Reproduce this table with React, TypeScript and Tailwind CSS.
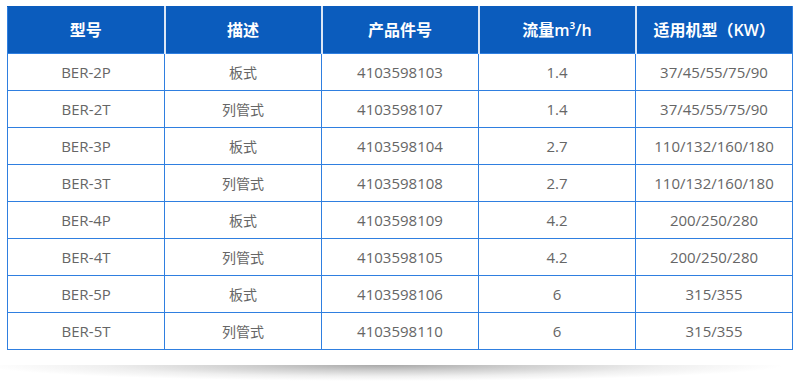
import React from "react";

const headers = ["型号", "描述", "产品件号", "流量m³/h", "适用机型（KW）"];

const rows: string[][] = [
  ["BER-2P", "板式", "4103598103", "1.4", "37/45/55/75/90"],
  ["BER-2T", "列管式", "4103598107", "1.4", "37/45/55/75/90"],
  ["BER-3P", "板式", "4103598104", "2.7", "110/132/160/180"],
  ["BER-3T", "列管式", "4103598108", "2.7", "110/132/160/180"],
  ["BER-4P", "板式", "4103598109", "4.2", "200/250/280"],
  ["BER-4T", "列管式", "4103598105", "4.2", "200/250/280"],
  ["BER-5P", "板式", "4103598106", "6", "315/355"],
  ["BER-5T", "列管式", "4103598110", "6", "315/355"],
];

export default function App() {
  return (
    <div
      className="w-[800px] h-[381px] bg-white overflow-hidden"
      style={{ fontFamily: '"Open Sans", "Noto Sans CJK SC", sans-serif' }}
    >
      <div className="pt-[6px] pl-[7px]">
        <table className="table-fixed border-collapse w-[786px]">
          <thead>
            <tr className="h-[47px] bg-[#0b5cbd]">
              {headers.map((h, i) => (
                <th
                  key={h}
                  className={`text-white text-[16px] font-semibold text-center border-[#0b5cbd] border-t border-b border-b-[#2f7fe0] ${
                    i === 0 ? "border-l border-l-[#2f7fe0]" : "border-l-2 border-l-[#dbe6f5]"
                  } ${i === headers.length - 1 ? "border-r border-r-[#2f7fe0]" : ""}`}
                >
                  {h}
                </th>
              ))}
            </tr>
          </thead>
          <tbody>
            {rows.map((r) => (
              <tr key={r[0]} className="h-[37px]">
                {r.map((c, i) => (
                  <td
                    key={i}
                    className={`border border-[#2f7fe0] text-center text-[#666666] ${
                      i === 1 ? "text-[14px]" : "text-[15px]"
                    }`}
                  >
                    {c}
                  </td>
                ))}
              </tr>
            ))}
          </tbody>
        </table>
      </div>
      <div className="mt-[15px] h-[16px] w-[800px] bg-[radial-gradient(ellipse_50%_100%_at_48%_0%,#a8a8a8_0%,#cfcfcf_35%,#efefef_70%,#ffffff_100%)]" />
    </div>
  );
}
